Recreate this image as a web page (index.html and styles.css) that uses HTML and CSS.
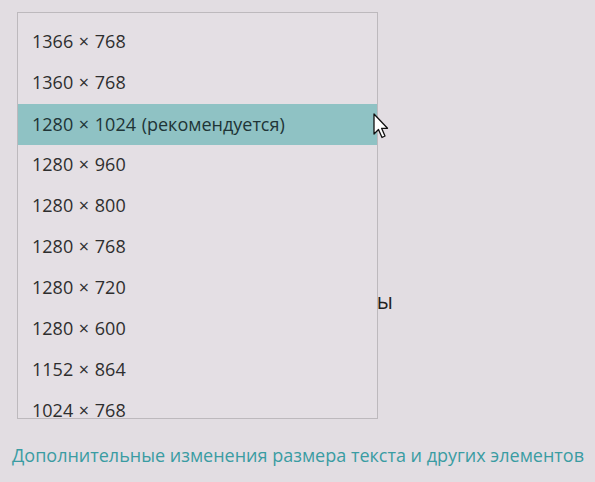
FILE: index.html
```html
<!DOCTYPE html>
<html lang="ru">
<head>
<meta charset="utf-8">
<title>Разрешение</title>
<link rel="stylesheet" href="styles.css">
</head>
<body>
<div class="page">
  <div class="under">
    <div class="under-line">Ориентация экраны</div>
  </div>
  <a class="link" href="#">Дополнительные изменения размера текста и других элементов</a>

  <div class="dropdown">
    <ul class="list">
      <li class="item">1366 × 768</li>
      <li class="item">1360 × 768</li>
      <li class="item selected">1280 × 1024 (рекомендуется)</li>
      <li class="item">1280 × 960</li>
      <li class="item">1280 × 800</li>
      <li class="item">1280 × 768</li>
      <li class="item">1280 × 720</li>
      <li class="item">1280 × 600</li>
      <li class="item">1152 × 864</li>
      <li class="item">1024 × 768</li>
    </ul>
  </div>

  <svg class="cursor" width="16" height="26" viewBox="0 0 16 26" aria-hidden="true">
    <path d="M1 1 L1 21 L5.5 16.5 L9 24.5 L12 23 L8.6 15.3 L14.5 15.3 Z" fill="#fff" stroke="#111" stroke-width="1.3" stroke-linejoin="round"/>
  </svg>
</div>
</body>
</html>
```

FILE: styles.css
```css
html, body {
  margin: 0;
  padding: 0;
}
body {
  background: #e2dde2;
  font-family: "Open Sans", "Noto Sans", sans-serif;
  color: #2e2e2e;
  width: 595px;
  height: 482px;
  overflow: hidden;
}
.page {
  position: relative;
  width: 595px;
  height: 482px;
  display: flex;
  flex-direction: column;
}
.under {
  padding-top: 286px;
  width: 393px;
  text-align: right;
}
.under-line {
  font-size: 21px;
  color: #222;
  line-height: 30px;
  white-space: nowrap;
}
.link {
  display: block;
  margin: 127px 0 0 12px;
  font-size: 18px;
  line-height: 24px;
  color: #3a9ca2;
  text-decoration: none;
  white-space: nowrap;
}
.dropdown {
  position: absolute;
  left: 17px;
  top: 12px;
  width: 359px;
  height: 405px;
  border: 1px solid #bdb9bd;
  background: #e4dfe4;
  overflow: hidden;
}
.list {
  list-style: none;
  margin: 0;
  padding: 8px 0 0 0;
}
.item {
  height: 41px;
  line-height: 41px;
  padding-left: 14px;
  font-size: 18px;
  word-spacing: 1px;
  white-space: nowrap;
}
.item.selected {
  background: #8fc2c4;
  color: #203436;
  margin-top: 1px;
  margin-bottom: -1px;
}
.cursor {
  position: absolute;
  left: 373px;
  top: 113px;
}
```
